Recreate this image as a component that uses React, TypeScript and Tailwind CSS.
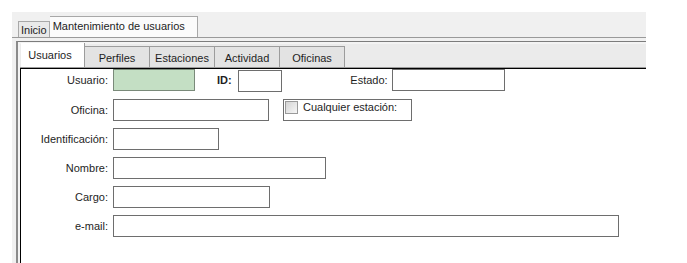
// Mantenimiento de usuarios — tabbed admin form
const Field = ({ label, width, className = '' }: { label: string; width: number; className?: string }) => (
  <div className={`flex items-center h-[22px] ${className}`}>
    <span className="w-[88px] text-right pr-[1px]">{label}</span>
    <div className="ml-[4px] h-[22px] border border-[#6e6e6e] bg-white" style={{ width }} />
  </div>
);

const SUB_TABS = ['Perfiles', 'Estaciones', 'Actividad', 'Oficinas'];

export default function App() {
  return (
    <div className="w-[687px] h-[263px] overflow-hidden bg-white pt-[12px] pl-[12px] font-['Liberation_Sans',Arial,sans-serif] text-[11px] text-[#1e1e1e]">
      <div className="w-[634px] h-[251px] bg-[#f0f0f0] flex flex-col">
        {/* document tabs */}
        <div className="h-[26px] flex items-end pl-[6px] border-b border-[#9a9a9a]">
          <div className="h-[16px] px-[2px] border border-b-0 border-[#a8a8a8] bg-[#e9e9e9] leading-[17px]">Inicio</div>
          <div className="h-[21px] pl-[3px] pr-[12px] border border-b-0 border-l-0 border-[#a8a8a8] bg-[#fbfbfb] leading-[18px]">
            Mantenimiento de usuarios
          </div>
        </div>

        {/* page panel */}
        <div className="flex-1 ml-[4px] mt-[3px] border-t border-t-[#7c7c7c] border-l-2 border-l-[#8a8a8a] bg-[#f3f3f3] flex flex-col">
          <div className="flex-1 ml-[2px] mt-[2px] flex flex-col">
            {/* sub tabs */}
            <div className="h-[24px] flex items-end bg-[#ebebeb] border-b border-[#9c9c9c]">
              <div className="h-[24px] w-[64px] ml-[1px] bg-white border-r border-[#9c9c9c] text-center leading-[24px] pr-[5px]">Usuarios</div>
              {SUB_TABS.map((t) => (
                <div key={t} className="h-[21px] w-[65px] bg-[#e3e3e3] border-t border-r border-[#9c9c9c] text-center leading-[22px]">
                  {t}
                </div>
              ))}
            </div>

            {/* form */}
            <div className="flex-1 bg-white border-t border-l border-black">
              <div className="flex items-center h-[22px]">
                <span className="w-[88px] text-right pr-[1px]">Usuario:</span>
                <div className="ml-[4px] w-[82px] h-[22px] border border-[#7a8a7a] bg-[#c4dfc4]" />
                <span className="ml-[22px] self-start pt-[3px] font-bold">ID:</span>
                <div className="ml-[6px] w-[44px] h-[22px] border border-[#6e6e6e] mt-[1px]" />
                <span className="w-[106px] text-right">Estado:</span>
                <div className="ml-[4px] w-[113px] h-[22px] border border-[#6e6e6e]" />
              </div>

              <div className="flex items-center h-[22px] mt-[8px]">
                <span className="w-[88px] text-right pr-[1px]">Oficina:</span>
                <div className="ml-[4px] w-[156px] h-[22px] border border-[#6e6e6e]" />
                <div className="ml-[14px] w-[129px] h-[22px] border border-[#6e6e6e] flex items-start pt-[1px] pl-[1px]">
                  <div className="w-[13px] h-[13px] border border-[#9a9a9a] bg-gradient-to-br from-[#d4d4d4] to-[#f6f6f6]" />
                  <span className="ml-[5px] leading-[13px]">Cualquier estación:</span>
                </div>
              </div>

              <Field label="Identificación:" width={106} className="mt-[7px]" />
              <Field label="Nombre:" width={213} className="mt-[7px]" />
              <Field label="Cargo:" width={157} className="mt-[7px]" />
              <Field label="e-mail:" width={506} className="mt-[7px]" />
            </div>
          </div>
        </div>
      </div>
    </div>
  );
}
